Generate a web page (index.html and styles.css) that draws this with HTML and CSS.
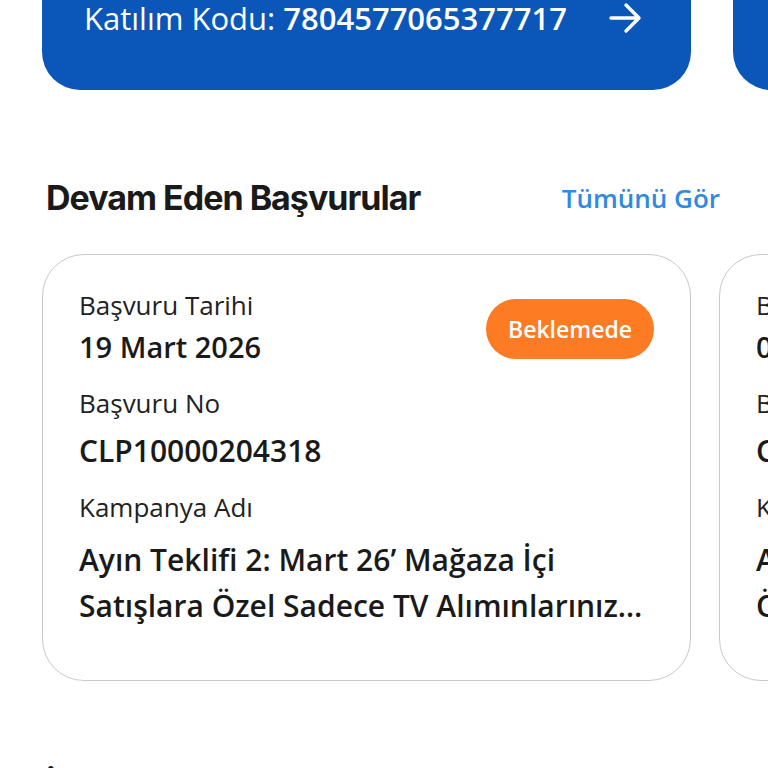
FILE: index.html
```html
<!DOCTYPE html>
<html lang="tr">
<head>
<meta charset="utf-8">
<link rel="stylesheet" href="styles.css">
</head>
<body>
<div class="page">
  <div class="promo-row">
    <div class="promo">
      <div class="promo-line">
        <span class="promo-text">Katılım Kodu: <b>7804577065377717</b></span>
        <svg class="arrow" viewBox="0 0 36 36" width="36" height="36"><path d="M4 18H31M19 5L32 18L19 31" fill="none" stroke="#fff" stroke-width="3.4" stroke-linecap="round" stroke-linejoin="round"/></svg>
      </div>
    </div>
    <div class="promo"></div>
  </div>

  <div class="section-head">
    <h2 class="section-title">Devam Eden Başvurular</h2>
    <a class="see-all">Tümünü Gör</a>
  </div>

  <div class="cards">
    <div class="card">
      <div class="card-top">
        <div>
          <div class="label">Başvuru Tarihi</div>
          <div class="value">19 Mart 2026</div>
        </div>
        <span class="badge">Beklemede</span>
      </div>
      <div class="label l2">Başvuru No</div>
      <div class="value v2">CLP10000204318</div>
      <div class="label l3">Kampanya Adı</div>
      <div class="value title">Ayın Teklifi 2: Mart 26’ Mağaza İçi Satışlara Özel Sadece TV Alımınlarınız İçin Geçerlidir</div>
    </div>
    <div class="card">
      <div class="card-top">
        <div>
          <div class="label">Başvuru Tarihi</div>
          <div class="value">05 Mart 2026</div>
        </div>
      </div>
      <div class="label l2">Başvuru No</div>
      <div class="value v2">CLP10000198822</div>
      <div class="label l3">Kampanya Adı</div>
      <div class="value title">Ayın Teklifi 1: Mart 26’ Online<br>Özel Satışlarda Geçerli Kampanya Detayları</div>
    </div>
  </div>

  <h2 class="next-title">İşlemlerim</h2>
</div>
</body>
</html>
```

FILE: styles.css
```css
html, body {
  margin: 0;
  padding: 0;
  background: #ffffff;
}
body {
  width: 768px;
  height: 768px;
  overflow: hidden;
  font-family: "Open Sans", Roboto, sans-serif;
  font-stretch: 96%;
  color: #1a1a1a;
}
.page {
  width: 768px;
}
.promo-row {
  display: flex;
  gap: 42px;
  padding-left: 42px;
  margin-top: -50px;
  overflow: hidden;
}
.promo {
  flex: 0 0 649px;
  height: 140px;
  background: #0b56b9;
  border-radius: 38px;
  box-sizing: border-box;
}
.promo-line {
  display: flex;
  align-items: center;
  padding: 50px 48px 0 42px;
  justify-content: space-between;
}
.promo-text {
  color: #ffffff;
  font-size: 31px;
  font-weight: 400;
  font-stretch: 100%;
  line-height: 32px;
}
.promo-text b {
  font-weight: 600;
}
.arrow {
  display: block;
}
.section-head {
  display: flex;
  justify-content: space-between;
  align-items: center;
  padding: 0 48px 0 46px;
  margin-top: 86px;
}
.section-title {
  margin: 0;
  font-family: Inter, "Noto Sans", sans-serif;
  font-stretch: normal;
  font-size: 34px;
  line-height: 44px;
  font-weight: 700;
  letter-spacing: -1px;
  color: #1a1a1a;
}
.see-all {
  font-size: 26px;
  color: #2e8ae2;
  font-weight: 600;
}
.cards {
  display: flex;
  gap: 28px;
  padding-left: 42px;
  margin-top: 34px;
  overflow: hidden;
}
.card {
  flex: 0 0 649px;
  height: 427px;
  box-sizing: border-box;
  border: 1.5px solid #c9c9c9;
  border-radius: 42px;
  padding: 32px 30px 0 36px;
}
.card-top {
  display: flex;
  justify-content: space-between;
  align-items: flex-start;
  padding-right: 6px;
}
.label {
  font-size: 26px;
  font-weight: 400;
  color: #222;
  line-height: 36px;
}
.value {
  font-size: 29px;
  font-weight: 600;
  color: #1a1a1a;
  line-height: 40px;
  margin-top: 4px;
}
.v2 {
  margin-top: 10px;
  font-size: 30px;
}
.l2 { margin-top: 18px; }
.l3 { margin-top: 18px; }
.title {
  font-size: 30px;
  margin-top: 12px;
  line-height: 46px;
  font-stretch: 92%;
  display: -webkit-box;
  -webkit-line-clamp: 2;
  -webkit-box-orient: vertical;
  overflow: hidden;
}
.badge {
  margin-top: 12px;
  background: #fd7b22;
  color: #fff;
  font-size: 23px;
  font-weight: 600;
  height: 60px;
  line-height: 60px;
  padding: 0 22px;
  border-radius: 30px;
}
.next-title {
  margin: 84px 0 0 46px;
  font-family: Inter, sans-serif;
  font-stretch: normal;
  font-size: 34px;
  font-weight: 700;
}
```
